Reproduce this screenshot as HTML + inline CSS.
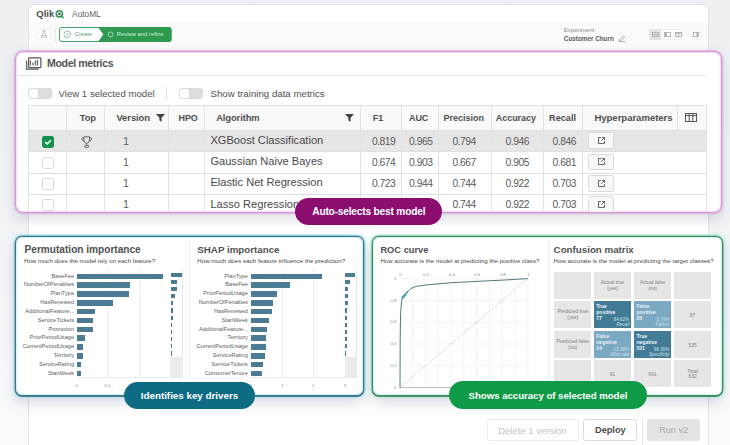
<!DOCTYPE html>
<html><head><meta charset="utf-8"><style>
*{box-sizing:border-box;margin:0;padding:0}
html,body{width:730px;height:445px;overflow:hidden}
body{background:linear-gradient(180deg,#edeff3 0%,#f0f2f5 40%,#f6f7f9 75%,#fbfcfc 100%);font-family:"Liberation Sans",sans-serif;color:#404040;position:relative}
.a{position:absolute}
.t{position:absolute;white-space:nowrap;line-height:1}
svg{position:absolute;overflow:visible}
.pill{position:absolute;border-radius:14px;color:#fff;font-weight:700;text-align:center;white-space:nowrap}
</style></head><body>
<div class="a" style="left:28px;top:4px;width:681px;height:470px;background:#fff;border:1px solid #e1e3e6;border-radius:6px"></div>
<div class="a" style="left:29px;top:22px;width:679px;height:30px;background:#fafafa"></div>
<div class="t" style="left:36.20px;top:8.67px;font-size:9.6px;font-weight:700;color:#525252;letter-spacing:0px">Qlik</div>
<svg style="left:55.2px;top:9.6px" width="10" height="9" viewBox="0 0 10 9"><circle cx="4.4" cy="3.8" r="3.1" fill="none" stroke="#2f9a57" stroke-width="1.6"/><circle cx="4.4" cy="3.9" r="1.3" fill="#5a5a5a"/><path d="M6.2 5.8 L8.6 8" stroke="#2f9a57" stroke-width="1.6"/></svg>
<div class="t" style="left:72.10px;top:10.17px;font-size:8.3px;font-weight:400;color:#626262;">AutoML</div>
<div class="a" style="left:36.7px;top:27.8px;width:14.8px;height:12.6px;background:#fff;border:1px solid #f1f1f1;border-radius:1.5px"></div>
<svg style="left:40px;top:30px" width="8" height="8" viewBox="0 0 8 8"><path d="M2.4 0.6 H5.6 M3.1 0.6 V3.1 L0.9 7.3 H7.1 L4.9 3.1 V0.6 M1.9 5.4 H6.1" fill="none" stroke="#a6a6a6" stroke-width="0.7"/></svg>
<div class="a" style="left:55px;top:28px;width:1px;height:12.5px;background:#e6e6e6"></div>
<svg style="left:59px;top:27px" width="113" height="15" viewBox="0 0 113 15"><rect x="0.5" y="0.5" width="111.6" height="14" rx="2.5" fill="#fff" stroke="#45a065" stroke-width="1"/><path d="M39 0 H110 Q112.5 0 112.5 2.5 V12.5 Q112.5 15 110 15 H39 L44.3 7.5 Z" fill="#2e9a4f"/><circle cx="8.2" cy="7.4" r="3.3" fill="none" stroke="#5aa875" stroke-width="0.65"/><path d="M6.6 7.5 L7.8 8.6 L9.9 6.3" fill="none" stroke="#5aa875" stroke-width="0.65"/><circle cx="51.6" cy="7.5" r="2.5" fill="none" stroke="#bfe8cb" stroke-width="0.8"/></svg>
<div class="t" style="left:74.80px;top:31.83px;font-size:5.75px;font-weight:400;color:#519d6c;">Create</div>
<div class="t" style="left:116.80px;top:31.85px;font-size:5.85px;font-weight:400;color:#d5f0dc;">Review and refine</div>
<div class="t" style="left:563.80px;top:26.92px;font-size:6.0px;font-weight:400;color:#8a8a8a;">Experiment</div>
<div class="t" style="left:563.80px;top:36.02px;font-size:6.35px;font-weight:700;color:#5a5a5a;">Customer Churn</div>
<svg style="left:618px;top:35px" width="8" height="7" viewBox="0 0 8 7"><path d="M1 6.2 L1.4 4.6 L5.4 0.8 L6.8 2.1 L2.8 5.9 Z M0.6 6.6 H7.6" fill="none" stroke="#999" stroke-width="0.7"/></svg>
<div class="a" style="left:648.8px;top:28.8px;width:34.2px;height:11.4px;background:#fff;border:1px solid #efefef;border-radius:1.5px"></div>
<div class="a" style="left:648.8px;top:28.8px;width:12.3px;height:11.4px;background:#e3e3e3;border-radius:1.5px 0 0 1.5px"></div>
<svg style="left:652px;top:32px" width="7" height="5" viewBox="0 0 7 5"><rect x="0.4" y="0.4" width="6" height="4.2" fill="none" stroke="#a6a6a6" stroke-width="0.8"/><path d="M0.4 2.5 H6.4" stroke="#a6a6a6" stroke-width="0.8"/></svg>
<svg style="left:663.7px;top:32px" width="7" height="5" viewBox="0 0 7 5"><rect x="0.4" y="0.4" width="6" height="4.2" fill="none" stroke="#a6a6a6" stroke-width="0.8"/><rect x="0.4" y="0.4" width="2.5" height="4.2" fill="#b4b4b4"/></svg>
<svg style="left:675.1px;top:32px" width="7" height="5" viewBox="0 0 7 5"><rect x="0.4" y="0.4" width="6" height="4.2" fill="none" stroke="#a6a6a6" stroke-width="0.8"/><path d="M0.4 1.6 H6.4 M3.4 1.6 V4.6" stroke="#a6a6a6" stroke-width="0.8"/></svg>
<div class="a" style="left:691.8px;top:28.8px;width:9.6px;height:11.4px;background:#fff;border:1px solid #efefef;border-radius:1.5px"></div>
<svg style="left:693.2px;top:32px" width="6" height="5" viewBox="0 0 6 5"><rect x="0.4" y="0.4" width="5" height="4.2" fill="none" stroke="#a6a6a6" stroke-width="0.8"/><rect x="3.4" y="0.4" width="2" height="4.2" fill="#b4b4b4"/></svg>
<div class="a" style="left:15px;top:51px;width:707px;height:162px;border:1px solid #d795d6;border-radius:8px;background:#fff;overflow:hidden;box-shadow:inset 0 0 1.5px 0.5px rgba(220,150,220,.6),0 0 1.5px 0.8px rgba(220,140,220,.55),0 6px 14px rgba(70,90,120,.2)">
<div class="a" style="left:-16px;top:-52px;width:730px;height:445px">
<svg style="left:26px;top:57px" width="16" height="13" viewBox="0 0 16 13"><rect x="2.6" y="0.9" width="12.3" height="9.7" rx="0.8" fill="none" stroke="#555" stroke-width="1.2"/><path d="M0.7 3.8 V12.2 H12.6" fill="none" stroke="#555" stroke-width="1.2"/><path d="M4.4 3.6 V8.4 M6.9 5.6 V8.4 M9.3 3.6 V8.4 M11.4 3.0 V8.6" stroke="#555" stroke-width="1.1"/></svg>
<div class="t" style="left:47.10px;top:58.43px;font-size:10.6px;font-weight:700;color:#555;letter-spacing:-0.4px">Model metrics</div>
<div class="a" style="left:19px;top:75px;width:687px;height:1px;background:#e3e3e3"></div>
<div class="a" style="left:28.1px;top:88px;width:23.5px;height:11px;background:#dcdcdc;border-radius:3px"></div>
<div class="a" style="left:29.2px;top:89px;width:9px;height:9px;background:#fff;border-radius:2.5px"></div>
<div class="t" style="left:58.50px;top:89.23px;font-size:9.65px;font-weight:400;color:#505050;">View 1 selected model</div>
<div class="a" style="left:166px;top:86.2px;width:1px;height:13.5px;background:#e0e0e0"></div>
<div class="a" style="left:179.2px;top:88px;width:23.5px;height:11px;background:#dcdcdc;border-radius:3px"></div>
<div class="a" style="left:180.3px;top:89px;width:9px;height:9px;background:#fff;border-radius:2.5px"></div>
<div class="t" style="left:210.50px;top:89.39px;font-size:9.7px;font-weight:400;color:#505050;">Show training data metrics</div>
<div class="a" style="left:28px;top:105px;width:679px;height:25px;background:#f9f9f9"></div>
<div class="a" style="left:28px;top:130px;width:679px;height:21.3px;background:#e6e6e6"></div>
<div class="a" style="left:28px;top:105px;width:679px;height:1px;background:#e0e0e0"></div>
<div class="a" style="left:28px;top:130px;width:679px;height:1px;background:#e0e0e0"></div>
<div class="a" style="left:28px;top:151.3px;width:679px;height:1px;background:#e0e0e0"></div>
<div class="a" style="left:28px;top:172.6px;width:679px;height:1px;background:#e0e0e0"></div>
<div class="a" style="left:28px;top:193.9px;width:679px;height:1px;background:#e0e0e0"></div>
<div class="a" style="left:28px;top:215.2px;width:679px;height:1px;background:#e0e0e0"></div>
<div class="a" style="left:28px;top:105px;width:1px;height:115px;background:#e2e2e2"></div>
<div class="a" style="left:66px;top:105px;width:1px;height:115px;background:#e2e2e2"></div>
<div class="a" style="left:104px;top:105px;width:1px;height:115px;background:#e2e2e2"></div>
<div class="a" style="left:168px;top:105px;width:1px;height:115px;background:#e2e2e2"></div>
<div class="a" style="left:204px;top:105px;width:1px;height:115px;background:#e2e2e2"></div>
<div class="a" style="left:360px;top:105px;width:1px;height:115px;background:#e2e2e2"></div>
<div class="a" style="left:401px;top:105px;width:1px;height:115px;background:#e2e2e2"></div>
<div class="a" style="left:438px;top:105px;width:1px;height:115px;background:#e2e2e2"></div>
<div class="a" style="left:491px;top:105px;width:1px;height:115px;background:#e2e2e2"></div>
<div class="a" style="left:543px;top:105px;width:1px;height:115px;background:#e2e2e2"></div>
<div class="a" style="left:582px;top:105px;width:1px;height:115px;background:#e2e2e2"></div>
<div class="a" style="left:677px;top:105px;width:1px;height:25px;background:#e2e2e2"></div>
<div class="a" style="left:706px;top:105px;width:1px;height:115px;background:#e2e2e2"></div>
<div class="t" style="left:79.80px;top:114.03px;font-size:9.3px;font-weight:700;color:#505050;letter-spacing:-0.1px">Top</div>
<div class="t" style="left:116.40px;top:113.26px;font-size:9.5px;font-weight:700;color:#505050;letter-spacing:-0.1px">Version</div>
<svg style="left:156px;top:113.5px" width="9" height="8" viewBox="0 0 9 8"><path d="M0 0 H9 L5.6 3.8 V7.8 L3.4 6.6 V3.8 Z" fill="#444"/></svg>
<div class="t" style="left:178.50px;top:113.68px;font-size:9.0px;font-weight:700;color:#505050;letter-spacing:-0.1px">HPO</div>
<div class="t" style="left:216.20px;top:113.34px;font-size:9.4px;font-weight:700;color:#505050;letter-spacing:-0.1px">Algorithm</div>
<svg style="left:344.6px;top:113.5px" width="9" height="8" viewBox="0 0 9 8"><path d="M0 0 H9 L5.6 3.8 V7.8 L3.4 6.6 V3.8 Z" fill="#444"/></svg>
<div class="t" style="left:372.70px;top:113.68px;font-size:9.0px;font-weight:700;color:#505050;">F1</div>
<div class="t" style="left:409.00px;top:113.68px;font-size:9.0px;font-weight:700;color:#505050;letter-spacing:-0.1px">AUC</div>
<div class="t" style="left:443.60px;top:113.68px;font-size:9.0px;font-weight:700;color:#505050;letter-spacing:0px">Precision</div>
<div class="t" style="left:495.80px;top:113.68px;font-size:9.0px;font-weight:700;color:#505050;letter-spacing:-0.05px">Accuracy</div>
<div class="t" style="left:549.00px;top:114.11px;font-size:9.2px;font-weight:700;color:#505050;">Recall</div>
<div class="t" style="left:594.40px;top:113.17px;font-size:9.6px;font-weight:700;color:#505050;letter-spacing:-0.05px">Hyperparameters</div>
<svg style="left:684.7px;top:113.3px" width="12" height="9" viewBox="0 0 12 9"><rect x="0.5" y="0.5" width="11" height="8" fill="none" stroke="#555" stroke-width="1"/><path d="M0.5 2.6 H11.5 M4.2 0.5 V8.5 M7.8 0.5 V8.5" stroke="#555" stroke-width="1"/></svg>
<svg style="left:42px;top:136px" width="12" height="12" viewBox="0 0 12 12"><rect width="12" height="12" rx="2.4" fill="#12924a"/><path d="M3.2 6.2 L5.2 8 L8.8 4.2" fill="none" stroke="#fff" stroke-width="1.6"/></svg>
<svg style="left:80.8px;top:136px" width="11.4" height="12" viewBox="0 0 11.4 12"><path d="M2.9 0.8 H8.5 V3.9 Q8.5 7.3 5.7 7.3 Q2.9 7.3 2.9 3.9 Z M2.9 1.9 H1.3 Q0.8 1.9 0.8 2.6 Q0.8 4.7 3.0 5.2 M8.5 1.9 H10.1 Q10.6 1.9 10.6 2.6 Q10.6 4.7 8.4 5.2 M5.7 7.3 V9.3" fill="none" stroke="#5a5a5a" stroke-width="0.9"/><rect x="3.7" y="9.3" width="4" height="2.1" rx="0.7" fill="none" stroke="#5a5a5a" stroke-width="0.9"/></svg>
<div class="t" style="left:116.00px;width:20px;text-align:center;top:135.56px;font-size:10.8px;font-weight:400;color:#5e5e5e;">1</div>
<div class="t" style="left:210.40px;top:134.80px;font-size:11.1px;font-weight:400;color:#484848;">XGBoost Classification</div>
<div class="t" style="left:363.55px;width:40px;text-align:center;top:136.58px;font-size:10.3px;font-weight:400;color:#5a5a5a;letter-spacing:-0.5px">0.819</div>
<div class="t" style="left:400.75px;width:40px;text-align:center;top:136.58px;font-size:10.3px;font-weight:400;color:#5a5a5a;letter-spacing:-0.5px">0.965</div>
<div class="t" style="left:444.05px;width:40px;text-align:center;top:136.58px;font-size:10.3px;font-weight:400;color:#5a5a5a;letter-spacing:-0.5px">0.794</div>
<div class="t" style="left:497.25px;width:40px;text-align:center;top:136.58px;font-size:10.3px;font-weight:400;color:#5a5a5a;letter-spacing:-0.5px">0.946</div>
<div class="t" style="left:544.25px;width:40px;text-align:center;top:136.58px;font-size:10.3px;font-weight:400;color:#5a5a5a;letter-spacing:-0.5px">0.846</div>
<div class="a" style="left:588.2px;top:132.35px;width:26px;height:16.8px;background:#f8f8f8;border:1px solid #dadada;border-radius:2.5px"></div>
<svg style="left:598.2px;top:137.1px" width="7" height="7" viewBox="0 0 7 7"><path d="M3 0.5 H0.5 V6.5 H6.5 V4 M3.2 3.8 L6.4 0.6 M4.2 0.5 H6.5 V2.8" fill="none" stroke="#555" stroke-width="0.9"/></svg>
<div class="a" style="left:42px;top:156.75px;width:12px;height:12px;background:#fff;border:1px solid #dcdcdc;border-radius:2px"></div>
<div class="t" style="left:116.00px;width:20px;text-align:center;top:156.86px;font-size:10.8px;font-weight:400;color:#5e5e5e;">1</div>
<div class="t" style="left:210.40px;top:156.10px;font-size:11.1px;font-weight:400;color:#484848;">Gaussian Naive Bayes</div>
<div class="t" style="left:363.55px;width:40px;text-align:center;top:157.88px;font-size:10.3px;font-weight:400;color:#5a5a5a;letter-spacing:-0.5px">0.674</div>
<div class="t" style="left:400.75px;width:40px;text-align:center;top:157.88px;font-size:10.3px;font-weight:400;color:#5a5a5a;letter-spacing:-0.5px">0.903</div>
<div class="t" style="left:444.05px;width:40px;text-align:center;top:157.88px;font-size:10.3px;font-weight:400;color:#5a5a5a;letter-spacing:-0.5px">0.667</div>
<div class="t" style="left:497.25px;width:40px;text-align:center;top:157.88px;font-size:10.3px;font-weight:400;color:#5a5a5a;letter-spacing:-0.5px">0.905</div>
<div class="t" style="left:544.25px;width:40px;text-align:center;top:157.88px;font-size:10.3px;font-weight:400;color:#5a5a5a;letter-spacing:-0.5px">0.681</div>
<div class="a" style="left:588.2px;top:153.64999999999998px;width:26px;height:16.8px;background:#f8f8f8;border:1px solid #dadada;border-radius:2.5px"></div>
<svg style="left:598.2px;top:158.3px" width="7" height="7" viewBox="0 0 7 7"><path d="M3 0.5 H0.5 V6.5 H6.5 V4 M3.2 3.8 L6.4 0.6 M4.2 0.5 H6.5 V2.8" fill="none" stroke="#555" stroke-width="0.9"/></svg>
<div class="a" style="left:42px;top:178.05px;width:12px;height:12px;background:#fff;border:1px solid #dcdcdc;border-radius:2px"></div>
<div class="t" style="left:116.00px;width:20px;text-align:center;top:178.16px;font-size:10.8px;font-weight:400;color:#5e5e5e;">1</div>
<div class="t" style="left:210.40px;top:177.40px;font-size:11.1px;font-weight:400;color:#484848;">Elastic Net Regression</div>
<div class="t" style="left:363.55px;width:40px;text-align:center;top:179.18px;font-size:10.3px;font-weight:400;color:#5a5a5a;letter-spacing:-0.5px">0.723</div>
<div class="t" style="left:400.75px;width:40px;text-align:center;top:179.18px;font-size:10.3px;font-weight:400;color:#5a5a5a;letter-spacing:-0.5px">0.944</div>
<div class="t" style="left:444.05px;width:40px;text-align:center;top:179.18px;font-size:10.3px;font-weight:400;color:#5a5a5a;letter-spacing:-0.5px">0.744</div>
<div class="t" style="left:497.25px;width:40px;text-align:center;top:179.18px;font-size:10.3px;font-weight:400;color:#5a5a5a;letter-spacing:-0.5px">0.922</div>
<div class="t" style="left:544.25px;width:40px;text-align:center;top:179.18px;font-size:10.3px;font-weight:400;color:#5a5a5a;letter-spacing:-0.5px">0.703</div>
<div class="a" style="left:588.2px;top:174.95px;width:26px;height:16.8px;background:#f8f8f8;border:1px solid #dadada;border-radius:2.5px"></div>
<svg style="left:598.2px;top:179.7px" width="7" height="7" viewBox="0 0 7 7"><path d="M3 0.5 H0.5 V6.5 H6.5 V4 M3.2 3.8 L6.4 0.6 M4.2 0.5 H6.5 V2.8" fill="none" stroke="#555" stroke-width="0.9"/></svg>
<div class="a" style="left:42px;top:199.35000000000002px;width:12px;height:12px;background:#fff;border:1px solid #dcdcdc;border-radius:2px"></div>
<div class="t" style="left:116.00px;width:20px;text-align:center;top:199.46px;font-size:10.8px;font-weight:400;color:#5e5e5e;">1</div>
<div class="t" style="left:210.40px;top:198.70px;font-size:11.1px;font-weight:400;color:#484848;">Lasso Regression</div>
<div class="t" style="left:363.55px;width:40px;text-align:center;top:200.48px;font-size:10.3px;font-weight:400;color:#5a5a5a;letter-spacing:-0.5px">0.723</div>
<div class="t" style="left:400.75px;width:40px;text-align:center;top:200.48px;font-size:10.3px;font-weight:400;color:#5a5a5a;letter-spacing:-0.5px">0.944</div>
<div class="t" style="left:444.05px;width:40px;text-align:center;top:200.48px;font-size:10.3px;font-weight:400;color:#5a5a5a;letter-spacing:-0.5px">0.744</div>
<div class="t" style="left:497.25px;width:40px;text-align:center;top:200.48px;font-size:10.3px;font-weight:400;color:#5a5a5a;letter-spacing:-0.5px">0.922</div>
<div class="t" style="left:544.25px;width:40px;text-align:center;top:200.48px;font-size:10.3px;font-weight:400;color:#5a5a5a;letter-spacing:-0.5px">0.703</div>
<div class="a" style="left:588.2px;top:196.25px;width:26px;height:16.8px;background:#f8f8f8;border:1px solid #dadada;border-radius:2.5px"></div>
<svg style="left:598.2px;top:201.0px" width="7" height="7" viewBox="0 0 7 7"><path d="M3 0.5 H0.5 V6.5 H6.5 V4 M3.2 3.8 L6.4 0.6 M4.2 0.5 H6.5 V2.8" fill="none" stroke="#555" stroke-width="0.9"/></svg>
</div></div>
<div class="pill" style="left:295.3px;top:198px;width:147px;height:27px;background:#8b0d6f;font-size:10.2px;line-height:28.6px;letter-spacing:-0.2px">Auto-selects best model</div>
<div class="a" style="left:15px;top:236px;width:349px;height:160px;border:1.6px solid #3d7483;border-radius:7px;background:#fff;box-shadow:0 0 0 0.6px rgba(61,116,131,.6),0 1px 0 0 rgba(61,116,131,.85),inset 0 0 1.5px 1px rgba(150,225,240,.55),0 0 1.5px 1.5px rgba(150,225,240,.6),0 7px 14px rgba(70,90,130,.22)"></div>
<div class="a" style="left:372px;top:236px;width:351px;height:160px;border:1.6px solid #3f8566;border-radius:7px;background:#fff;box-shadow:0 0 0 0.6px rgba(63,133,102,.6),0 1px 0 0 rgba(63,133,102,.85),inset 0 0 1.5px 1px rgba(160,240,200,.55),0 0 1.5px 1.5px rgba(160,240,200,.6),0 7px 14px rgba(70,90,130,.22)"></div>
<div class="t" style="left:24.60px;top:244.85px;font-size:10.1px;font-weight:700;color:#505050;">Permutation importance</div>
<div class="t" style="left:24.00px;top:258.44px;font-size:6.1px;font-weight:400;color:#474747;">How much does the model rely on each feature?</div>
<div class="a" style="left:188.5px;top:240px;width:1px;height:140px;background:#f2f2f2"></div>
<div class="t" style="left:197.30px;top:244.55px;font-size:9.75px;font-weight:700;color:#505050;">SHAP importance</div>
<div class="t" style="left:197.30px;top:258.41px;font-size:6.13px;font-weight:400;color:#474747;">How much does each feature influence the prediction?</div>
<div class="a" style="left:107.4px;top:270px;width:0.8px;height:108px;background:#efefef"></div>
<div class="a" style="left:139.4px;top:270px;width:0.8px;height:108px;background:#efefef"></div>
<div class="a" style="left:76.6px;top:377.4px;width:94.20000000000002px;height:0.8px;background:#e8e8e8"></div>
<div class="a" style="left:76.6px;top:273.59999999999997px;width:86.80000000000001px;height:5.6px;background:#4b7b95"></div>
<div class="t" style="left:-5.90px;width:80px;text-align:right;top:273.62px;font-size:5.65px;font-weight:400;color:#606060;">BaseFee</div>
<div class="a" style="left:76.6px;top:282.41999999999996px;width:53.400000000000006px;height:5.6px;background:#4b7b95"></div>
<div class="t" style="left:-5.90px;width:80px;text-align:right;top:282.44px;font-size:5.65px;font-weight:400;color:#606060;">NumberOfPenalities</div>
<div class="a" style="left:76.6px;top:291.23999999999995px;width:52.20000000000002px;height:5.6px;background:#4b7b95"></div>
<div class="t" style="left:-5.90px;width:80px;text-align:right;top:291.26px;font-size:5.65px;font-weight:400;color:#606060;">PlanType</div>
<div class="a" style="left:76.6px;top:300.05999999999995px;width:36.900000000000006px;height:5.6px;background:#4b7b95"></div>
<div class="t" style="left:-5.90px;width:80px;text-align:right;top:300.08px;font-size:5.65px;font-weight:400;color:#606060;">HasRenewed</div>
<div class="a" style="left:76.6px;top:308.87999999999994px;width:18.400000000000006px;height:5.6px;background:#4b7b95"></div>
<div class="t" style="left:-5.90px;width:80px;text-align:right;top:308.90px;font-size:5.65px;font-weight:400;color:#606060;">AdditionalFeature...</div>
<div class="a" style="left:76.6px;top:317.7px;width:16.5px;height:5.6px;background:#4b7b95"></div>
<div class="t" style="left:-5.90px;width:80px;text-align:right;top:317.72px;font-size:5.65px;font-weight:400;color:#606060;">ServiceTickets</div>
<div class="a" style="left:76.6px;top:326.52px;width:16.400000000000006px;height:5.6px;background:#4b7b95"></div>
<div class="t" style="left:-5.90px;width:80px;text-align:right;top:326.54px;font-size:5.65px;font-weight:400;color:#606060;">Promotion</div>
<div class="a" style="left:76.6px;top:335.34px;width:8.100000000000009px;height:5.6px;background:#4b7b95"></div>
<div class="t" style="left:-5.90px;width:80px;text-align:right;top:335.36px;font-size:5.65px;font-weight:400;color:#606060;">PriorPeriodUsage</div>
<div class="a" style="left:76.6px;top:344.15999999999997px;width:6.1000000000000085px;height:5.6px;background:#4b7b95"></div>
<div class="t" style="left:-5.90px;width:80px;text-align:right;top:344.18px;font-size:5.65px;font-weight:400;color:#606060;">CurrentPeriodUsage</div>
<div class="a" style="left:76.6px;top:352.97999999999996px;width:6.1000000000000085px;height:5.6px;background:#4b7b95"></div>
<div class="t" style="left:-5.90px;width:80px;text-align:right;top:353.00px;font-size:5.65px;font-weight:400;color:#606060;">Territory</div>
<div class="a" style="left:76.6px;top:361.79999999999995px;width:4.900000000000006px;height:5.6px;background:#4b7b95"></div>
<div class="t" style="left:-5.90px;width:80px;text-align:right;top:361.82px;font-size:5.65px;font-weight:400;color:#606060;">ServiceRating</div>
<div class="a" style="left:76.6px;top:370.61999999999995px;width:4.200000000000003px;height:5.6px;background:#4b7b95"></div>
<div class="t" style="left:-5.90px;width:80px;text-align:right;top:370.64px;font-size:5.65px;font-weight:400;color:#606060;">StartWeek</div>
<div class="t" style="left:69.60px;width:14px;text-align:center;top:384.24px;font-size:4.2px;font-weight:400;color:#888;">0</div>
<div class="t" style="left:100.40px;width:14px;text-align:center;top:384.24px;font-size:4.2px;font-weight:400;color:#888;">0.1</div>
<div class="t" style="left:132.40px;width:14px;text-align:center;top:384.24px;font-size:4.2px;font-weight:400;color:#888;">0.2</div>
<div class="a" style="left:170.3px;top:270px;width:12.6px;height:108px;background:#fff;border-right:0.8px solid #e6e6e6"></div>
<div class="a" style="left:170.3px;top:356.7px;width:12.3px;height:21.3px;background:#ebebeb"></div>
<div class="a" style="left:170.8px;top:272.7px;width:11.0px;height:4.2px;background:#4b7b95"></div>
<div class="a" style="left:170.8px;top:279.84999999999997px;width:6.699999999999989px;height:4.2px;background:#4b7b95"></div>
<div class="a" style="left:170.8px;top:287.0px;width:6.699999999999989px;height:4.2px;background:#4b7b95"></div>
<div class="a" style="left:170.8px;top:294.15px;width:4.699999999999989px;height:4.2px;background:#4b7b95"></div>
<div class="a" style="left:170.8px;top:301.3px;width:2.3999999999999773px;height:4.2px;background:#4b7b95"></div>
<div class="a" style="left:170.8px;top:308.45px;width:2.1999999999999886px;height:4.2px;background:#4b7b95"></div>
<div class="a" style="left:170.8px;top:315.6px;width:2.1999999999999886px;height:4.2px;background:#4b7b95"></div>
<div class="a" style="left:170.8px;top:322.75px;width:1.3999999999999773px;height:4.2px;background:#4b7b95"></div>
<div class="a" style="left:170.8px;top:329.9px;width:1.1999999999999886px;height:4.2px;background:#4b7b95"></div>
<div class="a" style="left:170.8px;top:337.05px;width:1.0999999999999943px;height:4.2px;background:#4b7b95"></div>
<div class="a" style="left:170.8px;top:344.2px;width:1.0px;height:4.2px;background:#4b7b95"></div>
<div class="a" style="left:170.8px;top:351.35px;width:0.8999999999999773px;height:4.2px;background:#4b7b95"></div>
<div class="a" style="left:282.4px;top:270px;width:0.8px;height:108px;background:#efefef"></div>
<div class="a" style="left:313.2px;top:270px;width:0.8px;height:108px;background:#efefef"></div>
<div class="a" style="left:344.8px;top:270px;width:0.8px;height:108px;background:#efefef"></div>
<div class="a" style="left:250.8px;top:377.4px;width:94.5px;height:0.8px;background:#e8e8e8"></div>
<div class="a" style="left:250.8px;top:273.59999999999997px;width:71.5px;height:5.6px;background:#4b7b95"></div>
<div class="t" style="left:167.90px;width:80px;text-align:right;top:273.62px;font-size:5.65px;font-weight:400;color:#606060;">PlanType</div>
<div class="a" style="left:250.8px;top:282.41999999999996px;width:39.69999999999999px;height:5.6px;background:#4b7b95"></div>
<div class="t" style="left:167.90px;width:80px;text-align:right;top:282.44px;font-size:5.65px;font-weight:400;color:#606060;">BaseFee</div>
<div class="a" style="left:250.8px;top:291.23999999999995px;width:26.19999999999999px;height:5.6px;background:#4b7b95"></div>
<div class="t" style="left:167.90px;width:80px;text-align:right;top:291.26px;font-size:5.65px;font-weight:400;color:#606060;">PriorPeriodUsage</div>
<div class="a" style="left:250.8px;top:300.05999999999995px;width:22.19999999999999px;height:5.6px;background:#4b7b95"></div>
<div class="t" style="left:167.90px;width:80px;text-align:right;top:300.08px;font-size:5.65px;font-weight:400;color:#606060;">NumberOfPenalties</div>
<div class="a" style="left:250.8px;top:308.87999999999994px;width:21.19999999999999px;height:5.6px;background:#4b7b95"></div>
<div class="t" style="left:167.90px;width:80px;text-align:right;top:308.90px;font-size:5.65px;font-weight:400;color:#606060;">HasRenewed</div>
<div class="a" style="left:250.8px;top:317.7px;width:18.0px;height:5.6px;background:#4b7b95"></div>
<div class="t" style="left:167.90px;width:80px;text-align:right;top:317.72px;font-size:5.65px;font-weight:400;color:#606060;">StartWeek</div>
<div class="a" style="left:250.8px;top:326.52px;width:16.099999999999966px;height:5.6px;background:#4b7b95"></div>
<div class="t" style="left:167.90px;width:80px;text-align:right;top:326.54px;font-size:5.65px;font-weight:400;color:#606060;">AdditionalFeature...</div>
<div class="a" style="left:250.8px;top:335.34px;width:15.599999999999966px;height:5.6px;background:#4b7b95"></div>
<div class="t" style="left:167.90px;width:80px;text-align:right;top:335.36px;font-size:5.65px;font-weight:400;color:#606060;">Territory</div>
<div class="a" style="left:250.8px;top:344.15999999999997px;width:15.099999999999966px;height:5.6px;background:#4b7b95"></div>
<div class="t" style="left:167.90px;width:80px;text-align:right;top:344.18px;font-size:5.65px;font-weight:400;color:#606060;">CurrentPeriodUsage</div>
<div class="a" style="left:250.8px;top:352.97999999999996px;width:14.099999999999966px;height:5.6px;background:#4b7b95"></div>
<div class="t" style="left:167.90px;width:80px;text-align:right;top:353.00px;font-size:5.65px;font-weight:400;color:#606060;">ServiceRating</div>
<div class="a" style="left:250.8px;top:361.79999999999995px;width:11.899999999999977px;height:5.6px;background:#4b7b95"></div>
<div class="t" style="left:167.90px;width:80px;text-align:right;top:361.82px;font-size:5.65px;font-weight:400;color:#606060;">ServiceTickets</div>
<div class="a" style="left:250.8px;top:370.61999999999995px;width:11.599999999999966px;height:5.6px;background:#4b7b95"></div>
<div class="t" style="left:167.90px;width:80px;text-align:right;top:370.64px;font-size:5.65px;font-weight:400;color:#606060;">ConsumerTenure</div>
<div class="t" style="left:244.00px;width:14px;text-align:center;top:384.24px;font-size:4.2px;font-weight:400;color:#888;">0</div>
<div class="t" style="left:275.40px;width:14px;text-align:center;top:384.24px;font-size:4.2px;font-weight:400;color:#888;">1</div>
<div class="t" style="left:306.20px;width:14px;text-align:center;top:384.24px;font-size:4.2px;font-weight:400;color:#888;">2</div>
<div class="t" style="left:337.80px;width:14px;text-align:center;top:384.24px;font-size:4.2px;font-weight:400;color:#888;">3</div>
<div class="a" style="left:344.8px;top:270px;width:12.6px;height:108px;background:#fff;border-right:0.8px solid #e6e6e6"></div>
<div class="a" style="left:344.8px;top:356.7px;width:12.3px;height:21.3px;background:#ebebeb"></div>
<div class="a" style="left:345.3px;top:272.7px;width:9.300000000000011px;height:4.2px;background:#4b7b95"></div>
<div class="a" style="left:345.3px;top:279.84999999999997px;width:4.899999999999977px;height:4.2px;background:#4b7b95"></div>
<div class="a" style="left:345.3px;top:287.0px;width:3.0px;height:4.2px;background:#4b7b95"></div>
<div class="a" style="left:345.3px;top:294.15px;width:2.8999999999999773px;height:4.2px;background:#4b7b95"></div>
<div class="a" style="left:345.3px;top:301.3px;width:2.5px;height:4.2px;background:#4b7b95"></div>
<div class="a" style="left:345.3px;top:308.45px;width:2.099999999999966px;height:4.2px;background:#4b7b95"></div>
<div class="a" style="left:345.3px;top:315.6px;width:1.8000000000000114px;height:4.2px;background:#4b7b95"></div>
<div class="a" style="left:345.3px;top:322.75px;width:1.6999999999999886px;height:4.2px;background:#4b7b95"></div>
<div class="a" style="left:345.3px;top:329.9px;width:1.599999999999966px;height:4.2px;background:#4b7b95"></div>
<div class="a" style="left:345.3px;top:337.05px;width:1.5px;height:4.2px;background:#4b7b95"></div>
<div class="a" style="left:345.3px;top:344.2px;width:1.3000000000000114px;height:4.2px;background:#4b7b95"></div>
<div class="a" style="left:345.3px;top:351.35px;width:1.1999999999999886px;height:4.2px;background:#4b7b95"></div>
<div class="t" style="left:380.40px;top:245.73px;font-size:9.3px;font-weight:700;color:#505050;">ROC curve</div>
<div class="t" style="left:380.40px;top:257.81px;font-size:6.13px;font-weight:400;color:#474747;">How accurate is the model at predicting the positive class?</div>
<div class="a" style="left:547.5px;top:240px;width:1px;height:145px;background:#f2f2f2"></div>
<svg style="left:0px;top:0px" width="730" height="445" viewBox="0 0 730 445"><line x1="412.60" y1="278.6" x2="412.60" y2="387.6" stroke="#eeeeee" stroke-width="0.7"/><line x1="425.40" y1="278.6" x2="425.40" y2="387.6" stroke="#eeeeee" stroke-width="0.7"/><line x1="438.20" y1="278.6" x2="438.20" y2="387.6" stroke="#eeeeee" stroke-width="0.7"/><line x1="451.00" y1="278.6" x2="451.00" y2="387.6" stroke="#eeeeee" stroke-width="0.7"/><line x1="463.80" y1="278.6" x2="463.80" y2="387.6" stroke="#eeeeee" stroke-width="0.7"/><line x1="476.60" y1="278.6" x2="476.60" y2="387.6" stroke="#eeeeee" stroke-width="0.7"/><line x1="489.40" y1="278.6" x2="489.40" y2="387.6" stroke="#eeeeee" stroke-width="0.7"/><line x1="502.20" y1="278.6" x2="502.20" y2="387.6" stroke="#eeeeee" stroke-width="0.7"/><line x1="515.00" y1="278.6" x2="515.00" y2="387.6" stroke="#eeeeee" stroke-width="0.7"/><line x1="527.80" y1="278.6" x2="527.80" y2="387.6" stroke="#eeeeee" stroke-width="0.7"/><line x1="399.8" y1="278.60" x2="527.8" y2="278.60" stroke="#eeeeee" stroke-width="0.7"/><line x1="399.8" y1="300.40" x2="527.8" y2="300.40" stroke="#eeeeee" stroke-width="0.7"/><line x1="399.8" y1="322.20" x2="527.8" y2="322.20" stroke="#eeeeee" stroke-width="0.7"/><line x1="399.8" y1="344.00" x2="527.8" y2="344.00" stroke="#eeeeee" stroke-width="0.7"/><line x1="399.8" y1="365.80" x2="527.8" y2="365.80" stroke="#eeeeee" stroke-width="0.7"/><line x1="399.8" y1="387.6" x2="527.8" y2="278.6" stroke="#a6a6a6" stroke-width="0.7" stroke-dasharray="1.4 1.4"/><line x1="399.8" y1="387.6" x2="527.8" y2="387.6" stroke="#a8a8a8" stroke-width="0.8"/><path d="M400.0 387.6 L400.2 340.0 L400.5 316.0 L401.0 308.0 L401.8 300.0 L404.1 295.3 L406.8 292.2 L409.5 289.9 L412.2 287.7 L416.7 286.3 L426.0 285.0 L452.0 282.6 L468.6 281.8 L503.1 280.1 L527.8 278.6" fill="none" stroke="#507a82" stroke-width="1.0" stroke-linejoin="round"/><path d="M402.6 297.6 L405.6 294.2" stroke="#35aab0" stroke-width="2.4" stroke-linecap="round"/><circle cx="406.9" cy="292.2" r="1.1" fill="#7a9aa0"/><circle cx="412.2" cy="287.8" r="1.1" fill="#9ab0b4"/></svg>
<div class="t" style="left:393.40px;width:14px;text-align:center;top:272.64px;font-size:4.2px;font-weight:400;color:#888;">0</div>
<div class="t" style="left:419.00px;width:14px;text-align:center;top:272.64px;font-size:4.2px;font-weight:400;color:#888;">0.2</div>
<div class="t" style="left:444.60px;width:14px;text-align:center;top:272.64px;font-size:4.2px;font-weight:400;color:#888;">0.4</div>
<div class="t" style="left:470.20px;width:14px;text-align:center;top:272.64px;font-size:4.2px;font-weight:400;color:#888;">0.6</div>
<div class="t" style="left:495.80px;width:14px;text-align:center;top:272.64px;font-size:4.2px;font-weight:400;color:#888;">0.8</div>
<div class="t" style="left:521.40px;width:14px;text-align:center;top:272.64px;font-size:4.2px;font-weight:400;color:#888;">1</div>
<div class="t" style="left:382.30px;width:14px;text-align:right;top:276.84px;font-size:4.2px;font-weight:400;color:#888;">1</div>
<div class="t" style="left:382.30px;width:14px;text-align:right;top:298.64px;font-size:4.2px;font-weight:400;color:#888;">0.8</div>
<div class="t" style="left:382.30px;width:14px;text-align:right;top:320.44px;font-size:4.2px;font-weight:400;color:#888;">0.6</div>
<div class="t" style="left:382.30px;width:14px;text-align:right;top:342.24px;font-size:4.2px;font-weight:400;color:#888;">0.4</div>
<div class="t" style="left:382.30px;width:14px;text-align:right;top:364.04px;font-size:4.2px;font-weight:400;color:#888;">0.2</div>
<div class="t" style="left:382.30px;width:14px;text-align:right;top:385.84px;font-size:4.2px;font-weight:400;color:#888;">0</div>
<div class="t" style="left:553.60px;top:245.35px;font-size:9.75px;font-weight:700;color:#505050;">Confusion matrix</div>
<div class="t" style="left:553.60px;top:257.82px;font-size:6.12px;font-weight:400;color:#474747;">How accurate is the model at predicting the target classes?</div>
<div class="a" style="left:554.1px;top:272.0px;width:37.2px;height:26.6px;background:#e6e6e6"></div>
<div class="a" style="left:593.8px;top:272.0px;width:37.2px;height:26.6px;background:#e6e6e6"></div>
<div class="a" style="left:634.0px;top:272.0px;width:37.2px;height:26.6px;background:#e6e6e6"></div>
<div class="a" style="left:674.0px;top:272.0px;width:37.2px;height:26.6px;background:#e6e6e6"></div>
<div class="a" style="left:554.1px;top:301.2px;width:37.2px;height:26.6px;background:#e6e6e6"></div>
<div class="a" style="left:593.8px;top:301.2px;width:37.2px;height:26.6px;background:#417b96"></div>
<div class="a" style="left:634.0px;top:301.2px;width:37.2px;height:26.6px;background:#7ba9c3"></div>
<div class="a" style="left:674.0px;top:301.2px;width:37.2px;height:26.6px;background:#e6e6e6"></div>
<div class="a" style="left:554.1px;top:331.0px;width:37.2px;height:26.6px;background:#e6e6e6"></div>
<div class="a" style="left:593.8px;top:331.0px;width:37.2px;height:26.6px;background:#7ba9c3"></div>
<div class="a" style="left:634.0px;top:331.0px;width:37.2px;height:26.6px;background:#417b96"></div>
<div class="a" style="left:674.0px;top:331.0px;width:37.2px;height:26.6px;background:#e6e6e6"></div>
<div class="a" style="left:554.1px;top:360.0px;width:37.2px;height:26.6px;background:#e6e6e6"></div>
<div class="a" style="left:593.8px;top:360.0px;width:37.2px;height:26.6px;background:#e6e6e6"></div>
<div class="a" style="left:634.0px;top:360.0px;width:37.2px;height:26.6px;background:#e6e6e6"></div>
<div class="a" style="left:674.0px;top:360.0px;width:37.2px;height:26.6px;background:#e6e6e6"></div>
<div class="t" style="left:593.80px;width:37.2px;text-align:center;top:281.05px;font-size:4.9px;font-weight:400;color:#808080;">Actual true</div>
<div class="t" style="left:593.80px;width:37.2px;text-align:center;top:286.85px;font-size:4.9px;font-weight:400;color:#808080;">(yes)</div>
<div class="t" style="left:634.00px;width:37.2px;text-align:center;top:281.05px;font-size:4.9px;font-weight:400;color:#808080;">Actual false</div>
<div class="t" style="left:634.00px;width:37.2px;text-align:center;top:286.85px;font-size:4.9px;font-weight:400;color:#808080;">(no)</div>
<div class="t" style="left:554.10px;width:37.2px;text-align:center;top:310.25px;font-size:4.9px;font-weight:400;color:#808080;">Predicted true</div>
<div class="t" style="left:554.10px;width:37.2px;text-align:center;top:316.05px;font-size:4.9px;font-weight:400;color:#808080;">(yes)</div>
<div class="t" style="left:554.10px;width:37.2px;text-align:center;top:340.05px;font-size:4.9px;font-weight:400;color:#808080;">Predicted false</div>
<div class="t" style="left:554.10px;width:37.2px;text-align:center;top:345.85px;font-size:4.9px;font-weight:400;color:#808080;">(no)</div>
<div class="t" style="left:674.00px;width:37.2px;text-align:center;top:313.75px;font-size:4.9px;font-weight:400;color:#808080;">97</div>
<div class="t" style="left:674.00px;width:37.2px;text-align:center;top:343.55px;font-size:4.9px;font-weight:400;color:#808080;">535</div>
<div class="t" style="left:593.80px;width:37.2px;text-align:center;top:372.95px;font-size:4.9px;font-weight:400;color:#808080;">91</div>
<div class="t" style="left:634.00px;width:37.2px;text-align:center;top:372.95px;font-size:4.9px;font-weight:400;color:#808080;">541</div>
<div class="t" style="left:674.00px;width:37.2px;text-align:center;top:369.65px;font-size:4.9px;font-weight:400;color:#808080;">Total</div>
<div class="t" style="left:674.00px;width:37.2px;text-align:center;top:375.45px;font-size:4.9px;font-weight:400;color:#808080;">632</div>
<div class="t" style="left:596.20px;top:303.88px;font-size:5.1px;font-weight:700;color:#e9f2f6;">True</div>
<div class="t" style="left:596.20px;top:310.28px;font-size:5.1px;font-weight:700;color:#e9f2f6;">positive</div>
<div class="t" style="left:596.20px;top:316.48px;font-size:5.1px;font-weight:700;color:#e9f2f6;">77</div>
<div class="t" style="left:599.20px;width:30px;text-align:right;top:317.71px;font-size:4.6px;font-weight:400;color:#cfe0e8;">84.62%</div>
<div class="t" style="left:599.20px;width:30px;text-align:right;top:322.71px;font-size:4.6px;font-weight:400;color:#cfe0e8;font-style:italic">Recall</div>
<div class="t" style="left:636.40px;top:303.88px;font-size:5.1px;font-weight:700;color:#e9f2f6;">False</div>
<div class="t" style="left:636.40px;top:310.28px;font-size:5.1px;font-weight:700;color:#e9f2f6;">positive</div>
<div class="t" style="left:636.40px;top:316.48px;font-size:5.1px;font-weight:700;color:#e9f2f6;">20</div>
<div class="t" style="left:639.40px;width:30px;text-align:right;top:317.71px;font-size:4.6px;font-weight:400;color:#cfe0e8;">3.70%</div>
<div class="t" style="left:639.40px;width:30px;text-align:right;top:322.71px;font-size:4.6px;font-weight:400;color:#cfe0e8;font-style:italic">Fallout</div>
<div class="t" style="left:596.20px;top:333.68px;font-size:5.1px;font-weight:700;color:#e9f2f6;">False</div>
<div class="t" style="left:596.20px;top:340.08px;font-size:5.1px;font-weight:700;color:#e9f2f6;">negative</div>
<div class="t" style="left:596.20px;top:346.28px;font-size:5.1px;font-weight:700;color:#e9f2f6;">14</div>
<div class="t" style="left:599.20px;width:30px;text-align:right;top:347.51px;font-size:4.6px;font-weight:400;color:#cfe0e8;">15.38%</div>
<div class="t" style="left:599.20px;width:30px;text-align:right;top:352.51px;font-size:4.6px;font-weight:400;color:#cfe0e8;font-style:italic">Miss rate</div>
<div class="t" style="left:636.40px;top:333.68px;font-size:5.1px;font-weight:700;color:#e9f2f6;">True</div>
<div class="t" style="left:636.40px;top:340.08px;font-size:5.1px;font-weight:700;color:#e9f2f6;">negative</div>
<div class="t" style="left:636.40px;top:346.28px;font-size:5.1px;font-weight:700;color:#e9f2f6;">521</div>
<div class="t" style="left:639.40px;width:30px;text-align:right;top:347.51px;font-size:4.6px;font-weight:400;color:#cfe0e8;">96.30%</div>
<div class="t" style="left:639.40px;width:30px;text-align:right;top:352.51px;font-size:4.6px;font-weight:400;color:#cfe0e8;font-style:italic">Specificity</div>
<div class="a" style="left:486.6px;top:418.5px;width:92.9px;height:22.4px;background:#fff;border:1px solid #ebebeb;border-radius:2.5px"></div>
<div class="t" style="left:498.20px;top:425.56px;font-size:9.5px;font-weight:400;color:#c4c4c4;">Delete 1 version</div>
<div class="a" style="left:582.7px;top:418.5px;width:54.8px;height:22.4px;background:#fff;border:1px solid #dcdcdc;border-radius:2.5px"></div>
<div class="t" style="left:595.00px;top:425.81px;font-size:9.2px;font-weight:700;color:#4a4a4a;">Deploy</div>
<div class="a" style="left:642.4px;top:418px;width:0.8px;height:27px;background:#e4e4e4"></div>
<div class="a" style="left:647.4px;top:418.5px;width:52.8px;height:22.4px;background:#e4e4e4;border-radius:2.5px"></div>
<div class="t" style="left:659.20px;top:425.85px;font-size:9.15px;font-weight:400;color:#a9a9a9;">Run v2</div>
<div class="pill" style="left:124px;top:382px;width:131px;height:27px;background:#0e6b84;font-size:9.8px;line-height:27px">Identifies key drivers</div>
<div class="pill" style="left:449px;top:381px;width:198px;height:28px;background:#0f9a48;font-size:9.6px;line-height:29.6px">Shows accuracy of selected model</div>
</body></html>
